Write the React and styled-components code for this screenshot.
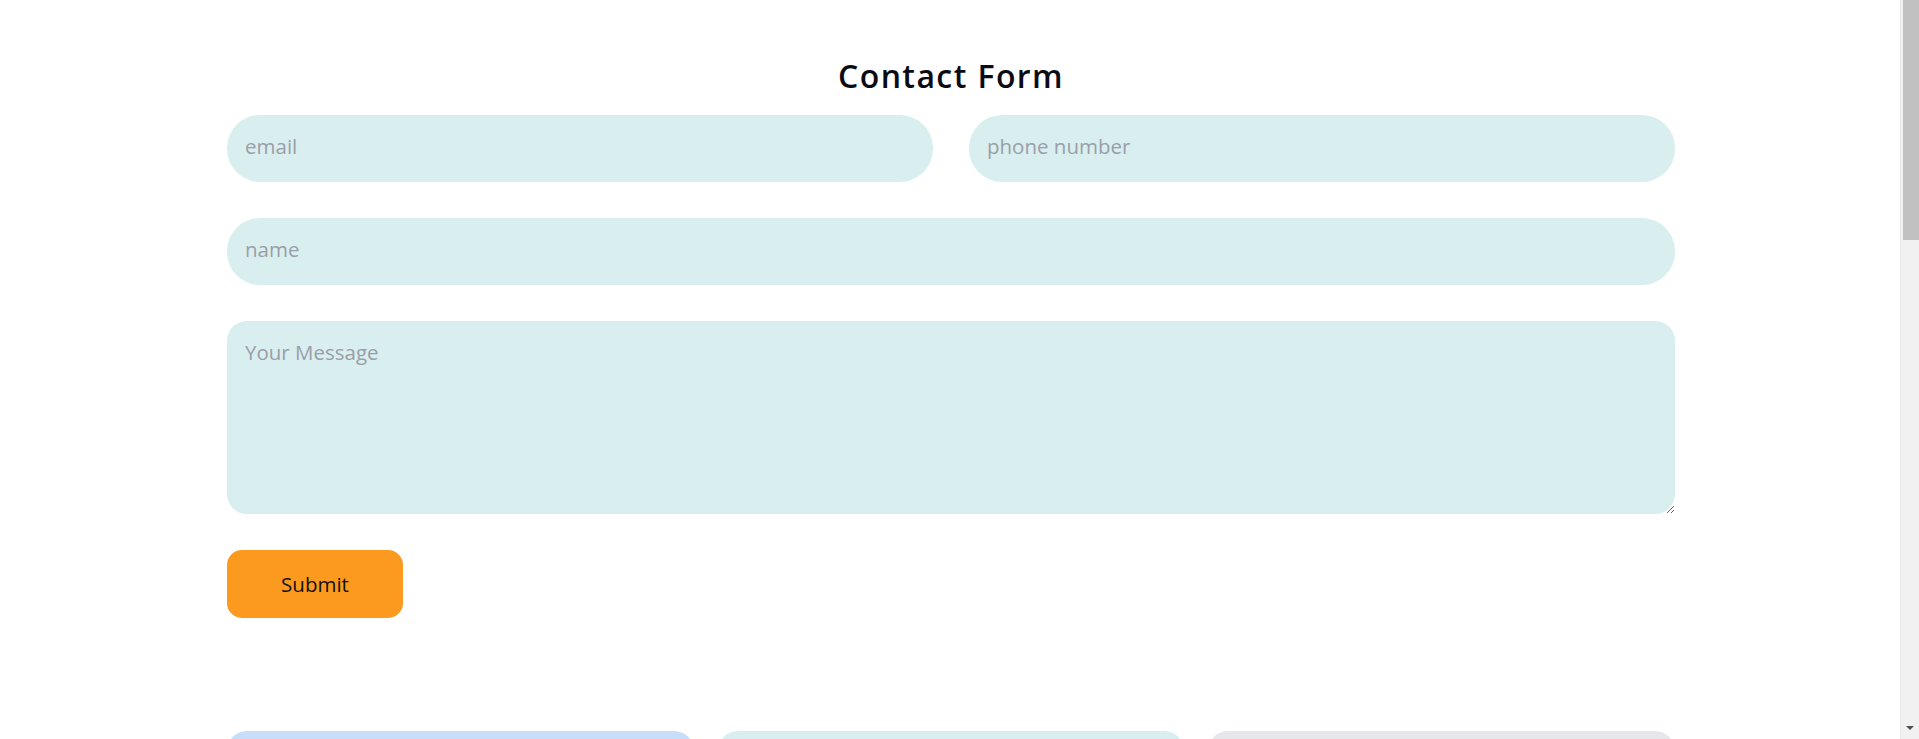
import React from 'react';
import styled, { createGlobalStyle } from 'styled-components';

const GlobalStyle = createGlobalStyle`
  body {
    margin: 0;
    background: #ffffff;
    font-family: "Open Sans", "Noto Sans", sans-serif;
  }
`;

const Page = styled.main`
  min-height: 2170px;
  padding-right: 17px;
`;

/* drawn scrollbar, the headless shot hides the native one */
const ScrollTrack = styled.div`
  position: fixed;
  top: 0;
  right: 0;
  width: 19px;
  height: 100vh;
  background: #f1f1f1;
  border-left: 1px solid #e8e8e8;
  box-sizing: border-box;
`;

const ScrollThumb = styled.div`
  margin-left: 2px;
  width: 17px;
  height: 240px;
  background: #c1c1c1;
`;

const ScrollArrow = styled.div`
  position: absolute;
  bottom: 9px;
  left: 5px;
  width: 0;
  height: 0;
  border-left: 4px solid transparent;
  border-right: 4px solid transparent;
  border-top: 4px solid #505050;
`;

const Container = styled.div`
  width: 1448px;
  margin: 0 auto;
  padding-top: 56px;
`;

const Title = styled.h2`
  margin: 0 0 19px;
  text-align: center;
  font-family: "Open Sans", sans-serif;
  font-weight: 600;
  font-size: 32px;
  line-height: 40px;
  letter-spacing: 1.4px;
  color: #0b0b14;
`;

const Form = styled.form`
  display: grid;
  grid-template-columns: 1fr 1fr;
  gap: 36px;
`;

const Field = styled.input`
  grid-column: ${(p) => (p.$wide ? '1 / -1' : 'auto')};
  box-sizing: border-box;
  height: 67px;
  border: none;
  outline: none;
  border-radius: 33px;
  background: #d9eeef;
  padding: 0 18px 5px;
  font-family: "Open Sans", sans-serif;
  font-size: 20.5px;
  color: #333;

  &::placeholder {
    color: #9a9ea8;
  }
`;

const Message = styled.textarea`
  grid-column: 1 / -1;
  box-sizing: border-box;
  height: 193px;
  border: none;
  outline: none;
  border-radius: 20px;
  background: #d9eeef;
  padding: 17px 18px 12px;
  font-family: "Open Sans", sans-serif;
  font-size: 20.5px;
  line-height: 28px;
  color: #333;

  &::placeholder {
    color: #9a9ea8;
  }
`;

const SubmitButton = styled.button`
  grid-column: 1 / -1;
  justify-self: start;
  width: 176px;
  height: 68px;
  border: none;
  border-radius: 15px;
  background: #fb9a1e;
  font-family: "Open Sans", sans-serif;
  font-size: 20.5px;
  color: #111;
  cursor: pointer;
`;

const Cards = styled.section`
  display: grid;
  grid-template-columns: repeat(3, 1fr);
  gap: 24px;
  margin-top: 113px;
`;

const Card = styled.div`
  height: 420px;
  border-radius: 20px;
  background: ${(p) => p.$bg};
`;

export default function App() {
  return (
    <Page>
      <GlobalStyle />
      <Container>
        <Title>Contact Form</Title>
        <Form onSubmit={(e) => e.preventDefault()}>
          <Field type="email" placeholder="email" />
          <Field type="tel" placeholder="phone number" />
          <Field $wide type="text" placeholder="name" />
          <Message placeholder="Your Message" />
          <SubmitButton type="submit">Submit</SubmitButton>
        </Form>
        <Cards>
          <Card $bg="#c7defb" />
          <Card $bg="#d9eeef" />
          <Card $bg="#e6e7eb" />
        </Cards>
      </Container>
      <ScrollTrack>
        <ScrollThumb />
        <ScrollArrow />
      </ScrollTrack>
    </Page>
  );
}
